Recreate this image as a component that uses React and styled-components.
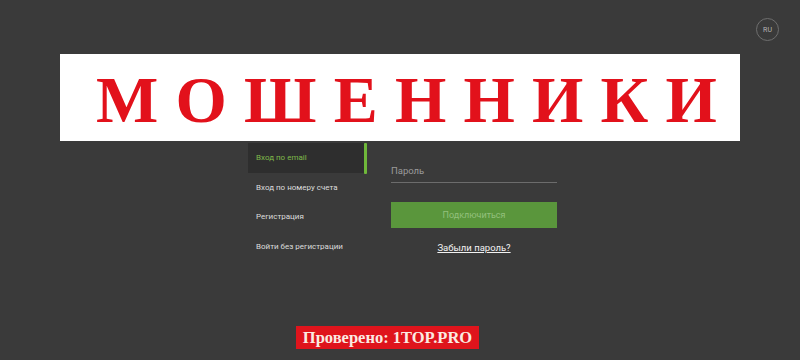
import React from "react";
import styled, { createGlobalStyle } from "styled-components";

const Global = createGlobalStyle`
  html, body { margin: 0; padding: 0; background: #3a3a3a; }
  body { font-family: Roboto, "Noto Sans", sans-serif; }
`;

const Page = styled.div`
  position: relative;
  width: 800px;
  height: 360px;
  background: #3a3a3a;
  overflow: hidden;
  display: flex;
  flex-direction: column;
`;

const Header = styled.header`
  height: 54px;
  display: flex;
  justify-content: flex-end;
  align-items: flex-start;
  padding: 18px 21px 0 0;
  box-sizing: border-box;
`;

const LangButton = styled.button`
  width: 23px;
  height: 23px;
  border-radius: 50%;
  border: 1px solid #6e6e6e;
  background: transparent;
  color: #b5b5b5;
  font-family: Roboto, sans-serif;
  font-size: 7px;
  padding: 0;
  display: flex;
  align-items: center;
  justify-content: center;
`;

const Banner = styled.div`
  margin: 0 60px;
  height: 87px;
  background: #ffffff;
  display: flex;
  align-items: center;
  padding-left: 36px;
  box-sizing: border-box;
`;

const BannerText = styled.span`
  font-family: "Liberation Serif", "Times New Roman", serif;
  font-weight: 700;
  font-size: 66px;
  line-height: 1;
  letter-spacing: 17.2px;
  color: #e2111b;
  margin-top: 4px;
`;

const Main = styled.main`
  display: flex;
  align-items: flex-start;
  margin-top: 2px;
  padding-left: 248px;
`;

const Sidebar = styled.nav`
  width: 120px;
  display: flex;
  flex-direction: column;
`;

const Tab = styled.div`
  position: relative;
  height: 29.5px;
  display: flex;
  align-items: center;
  padding-left: 8px;
  font-size: 8px;
  color: ${(p) => (p.$active ? "#7fb94a" : "#dcdcdc")};
  background: ${(p) => (p.$active ? "#2e2e2e" : "transparent")};
  margin-right: 4px;
  &::after {
    content: "";
    display: ${(p) => (p.$active ? "block" : "none")};
    position: absolute;
    right: -3px;
    top: 0;
    width: 3px;
    height: 31px;
    border-radius: 1px;
    background: #6fb83a;
  }
`;

const Form = styled.div`
  margin-left: 23px;
  width: 166px;
  display: flex;
  flex-direction: column;
  padding-top: 22px;
`;

const Field = styled.div`
  height: 17px;
  border-bottom: 1px solid #6c6c6c;
  display: flex;
  align-items: flex-start;
  font-size: 9.5px;
  color: #9a9a9a;
`;

const Submit = styled.button`
  margin-top: 19px;
  height: 26px;
  border: none;
  background: #5a963c;
  color: #93c07c;
  font-family: Roboto, sans-serif;
  font-size: 9px;
  padding: 0;
`;

const Forgot = styled.a`
  margin-top: 14px;
  align-self: center;
  font-size: 9.5px;
  color: #f2f2f2;
  text-decoration: underline;
`;

const Stamp = styled.div`
  position: absolute;
  left: 296px;
  top: 326px;
  width: 183px;
  height: 23px;
  background: #df141c;
  display: flex;
  align-items: center;
  justify-content: center;
  font-family: "Liberation Serif", "Times New Roman", serif;
  font-weight: 700;
  font-size: 16.5px;
  color: #fbeae2;
`;

export default function App() {
  const tabs = [
    "Вход по email",
    "Вход по номеру счета",
    "Регистрация",
    "Войти без регистрации",
  ];
  return (
    <>
      <Global />
      <Page>
        <Header>
          <LangButton>RU</LangButton>
        </Header>
        <Banner>
          <BannerText>МОШЕННИКИ</BannerText>
        </Banner>
        <Main>
          <Sidebar>
            {tabs.map((t, i) => (
              <Tab key={t} $active={i === 0}>
                {t}
              </Tab>
            ))}
          </Sidebar>
          <Form>
            <Field>Пароль</Field>
            <Submit>Подключиться</Submit>
            <Forgot>Забыли пароль?</Forgot>
          </Form>
        </Main>
        <Stamp>Проверено: 1TOP.PRO</Stamp>
      </Page>
    </>
  );
}
